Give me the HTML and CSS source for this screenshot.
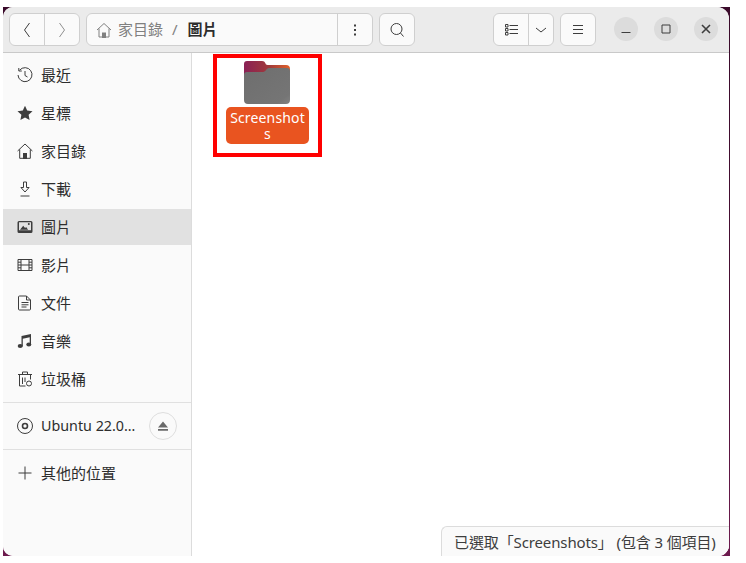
FILE: index.html
```html
<!DOCTYPE html>
<html lang="zh-Hant">
<head>
<meta charset="utf-8">
<title>圖片</title>
<link rel="stylesheet" href="styles.css">
</head>
<body>
<div class="desktop">
  <div class="window">
    <header class="toolbar">
      <div class="group nav">
        <button class="btn seg"><svg width="16" height="16" viewBox="0 0 16 16"><path class="ln" d="M10.500 1 5.500 8l5 7"/></svg></button>
        <button class="btn seg dim"><svg width="16" height="16" viewBox="0 0 16 16"><path class="ln" d="M5.500 1l5 7-5 7"/></svg></button>
      </div>
      <div class="group path">
        <div class="crumbs">
          <svg class="home-ic" width="16" height="16" viewBox="0 0 16 16"><path class="ln" d="M1 8 8 1.500 15 8M3 6.500V15h3.500M13 6.500V15H9.500"/><path class="solid" d="M6 10.500h4V16H6z"/></svg>
          <span class="crumb">家目錄</span>
          <span class="slash">/</span>
          <span class="crumb cur">圖片</span>
        </div>
        <button class="btn dots"><svg width="16" height="16" viewBox="0 0 16 16"><rect x="7" y="2.500" width="2" height="2"/><rect x="7" y="7" width="2" height="2"/><rect x="7" y="11.500" width="2" height="2"/></svg></button>
      </div>
      <button class="btn solo search"><svg width="16" height="16" viewBox="0 0 16 16"><circle class="ln" cx="7.500" cy="7" r="5.500"/><path class="ln" d="m11.500 11 3 3.500"/></svg></button>
      <div class="group view">
        <button class="btn viewlist"><svg width="13" height="12" viewBox="0 0 13 12"><path class="ln" d="M4.500 1.500H13M4.500 5.500H13M4.500 9.500H13"/><path class="ln" d="M.500.500h2.500v2.500H.500zM.500 4.500h2.500v2.500H.500zM.500 8.500h2.500v2.500H.500z"/></svg></button>
        <button class="btn viewmore"><svg width="12" height="12" viewBox="0 0 12 12"><path class="ln" d="M1 4l5 4 5-4"/></svg></button>
      </div>
      <button class="btn solo menu"><svg width="16" height="16" viewBox="0 0 16 16"><path class="ln" d="M3 3.500h10M3 7.500h10M3 11.500h10"/></svg></button>
      <div class="winctl">
        <button class="circle"><svg width="12" height="12" viewBox="0 0 12 12"><path class="ln" d="M1.500 9.500h9"/></svg></button>
        <button class="circle"><svg width="12" height="12" viewBox="0 0 12 12"><path class="ln" d="M2 2h8v8H2z"/></svg></button>
        <button class="circle"><svg width="12" height="12" viewBox="0 0 12 12"><path class="ln thick" d="M2 2l8 8M10 2 2 10"/></svg></button>
      </div>
    </header>
    <div class="body">
      <nav class="sidebar">
        <ul class="places">
          <li class="row"><svg class="ic" viewBox="0 0 16 16"><path class="ln" d="M2.600 3.200A7 7 0 1 1 1 8M1.800 1v3h3M8 4v4.500l2.500 1.500"/></svg><span>最近</span></li>
          <li class="row"><svg class="ic" viewBox="0 0 16 16"><path d="m8 .8 2.200 4.800 5.300.6-3.900 3.600 1 5.200L8 12.400l-4.600 2.600 1-5.200L.5 6.200l5.300-.6z"/></svg><span>星標</span></li>
          <li class="row"><svg class="ic" viewBox="0 0 16 16"><path class="ln" d="M.6 8 8 1l7.400 7M2.700 6.500v8.800h3.600"/><path class="ln" d="M13.300 6.500v8.800H9.700"/><path d="M6 10h4v6H6z"/></svg><span>家目錄</span></li>
          <li class="row"><svg class="ic" viewBox="0 0 16 16"><path class="ln" d="M6.500 1h3v5.500h2.600L8 11 3.900 6.500h2.600zM3.500 15h9"/></svg><span>下載</span></li>
          <li class="row on"><svg class="ic" viewBox="0 0 16 16"><path d="M2 2h12a1.500 1.500 0 0 1 1.500 1.500v9A1.500 1.500 0 0 1 14 14H2a1.500 1.500 0 0 1-1.500-1.500v-9A1.500 1.500 0 0 1 2 2zm0 1.200v8h12v-8z" fill-rule="evenodd"/><path d="m3 10.800 3.200-4 1.900 2.200 1-1 2 2.800z"/><circle cx="11.800" cy="5" r="1"/></svg><span>圖片</span></li>
          <li class="row"><svg class="ic" viewBox="0 0 16 16"><path class="ln" d="M1 2.500h14v11H1zM4 2.500v11M12 2.500v11M4 8h8M1 5.200h3M1 8h3M1 10.800h3M12 5.200h3M12 8h3M12 10.800h3"/></svg><span>影片</span></li>
          <li class="row"><svg class="ic" viewBox="0 0 16 16"><path class="ln" d="M2.500 1h7l4 4v9a1 1 0 0 1-1 1h-10a1 1 0 0 1-1-1V2a1 1 0 0 1 1-1zM9.500 1v4h4M4.500 7.500h7M4.500 9.800h7M4.500 12h5"/></svg><span>文件</span></li>
          <li class="row"><svg class="ic" viewBox="0 0 16 16"><path d="M4.500 3 14 1v10.500h-1.300V4.300L5.800 5.700v7.800H4.500z"/><ellipse cx="3.200" cy="13" rx="2.500" ry="2"/><ellipse cx="11.800" cy="11.500" rx="2.500" ry="2"/></svg><span>音樂</span></li>
          <li class="row"><svg class="ic" viewBox="0 0 16 16"><path class="ln" d="M1 3.500h14M5.500 3.500V1h5v2.500M2.500 3.500V15h6M13.500 3.500v5M5.500 6.500V13M8 6.500V11"/><circle class="ln" cx="12" cy="12.500" r="2.500"/></svg><span>垃圾桶</span></li>
        </ul>
        <div class="sep"></div>
        <div class="row device">
          <svg class="ic" viewBox="0 0 16 16"><circle class="ln" cx="8" cy="8" r="7.500"/><circle class="ln thick" cx="8" cy="8" r="2.500"/></svg>
          <span class="devname">Ubuntu 22.0…</span>
          <button class="eject"><svg width="12" height="12" viewBox="0 0 12 12"><path d="M6 1.500 11 7.500H1zM1 9h10v1.700H1z"/></svg></button>
        </div>
        <div class="sep"></div>
        <div class="row other"><svg class="ic" viewBox="0 0 16 16"><path class="ln" d="M8 1.500v13M1.500 8h13"/></svg><span>其他的位置</span></div>
      </nav>
      <main class="files">
        <div class="item">
          <svg class="folder" width="46" height="44" viewBox="0 0 46 44">
            <defs>
              <linearGradient id="back" x1="0" y1="0" x2="1" y2="0"><stop offset="0" stop-color="#8a2055"/><stop offset="0.55" stop-color="#a03a3a"/><stop offset="1" stop-color="#e0612a"/></linearGradient>
              <linearGradient id="front" x1="0" y1="0" x2="1" y2="1"><stop offset="0" stop-color="#6e6e6e"/><stop offset="0.85" stop-color="#757575"/><stop offset="1" stop-color="#828282"/></linearGradient>
            </defs>
            <path fill="url(#back)" d="M3 0h15c2 0 3 1 4 3.500C23 4 24 4 25 4h17a4 4 0 0 1 4 4v8H0V3a3 3 0 0 1 3-3z"/>
            <path fill="url(#front)" d="M3 11h15c2 0 3-.5 4-2 1-1.500 2-2 4-2h17a3 3 0 0 1 3 3v29a4 4 0 0 1-4 4H4a4 4 0 0 1-4-4V14a3 3 0 0 1 3-3z"/>
          </svg>
          <div class="label">Screenshots</div>
        </div>
        <div class="mark"></div>
        <div class="status">已選取「Screenshots」 (包含 3 個項目)</div>
      </main>
    </div>
  </div>
</div>
</body>
</html>
```
FILE: styles.css
```css
* { box-sizing: border-box; }
html, body { margin: 0; padding: 0; background: #fff; }
body { width: 746px; height: 563px; overflow: hidden; font-family: "Noto Sans", "Noto Sans CJK TC", sans-serif; color: #2d2d2d; }
.desktop {
  width: 727px; height: 549px; margin: 7px 0 0 3px; padding-right: 1px;
  background: linear-gradient(#3a0a2a, #4a0f34 60%, #6d1a4e);
}
.window {
  width: 726px; height: 549px; display: flex; flex-direction: column; overflow: hidden;
  background: #fafafa; border-radius: 10px 12px 11px 10px;
}
.toolbar {
  flex: none; height: 46px; padding: 6px 0 0 6px; display: flex; align-items: flex-start;
  background: #ebebeb; border-bottom: 1px solid #c9c9c9;
}
button { font: inherit; color: inherit; padding: 0; margin: 0; border: 0; background: none; display: flex; align-items: center; justify-content: center; }
svg { fill: #3d3d3d; display: block; }
.ln { fill: none; stroke: #3d3d3d; stroke-width: 1; }
.thick { stroke-width: 1.600; }
.group { display: flex; height: 33px; background: #fafafa; border: 1px solid #cfcfcf; border-radius: 6px; }
.btn.solo { width: 36px; height: 33px; background: #fafafa; border: 1px solid #cfcfcf; border-radius: 6px; }
.nav { width: 71px; }
.seg { flex: 1; }
.seg + .seg { border-left: 1px solid #cfcfcf; }
.dim svg .ln { stroke: #8f8f8f; }
.path { width: 287px; margin-left: 6px; justify-content: space-between; }
.crumbs { display: flex; align-items: center; padding-left: 9px; font-size: 15px; color: #808080; }
.home-ic { margin-right: 6px; }
.home-ic .ln { stroke: #808080; }
.home-ic .solid { fill: #808080; }
.slash { margin: 0 10px 0 9px; }
.cur { color: #2d2d2d; font-weight: 700; }
.crumb, .slash { padding-bottom: 2px; }
.dots { width: 35px; border-left: 1px solid #cfcfcf; }
.search { margin-left: 6px; }
.view { width: 61px; margin-left: 78px; }
.viewlist { width: 35px; border-right: 1px solid #cfcfcf; }
.viewmore { flex: 1; }
.menu { margin-left: 6px; }
.winctl { display: flex; gap: 16px; margin: 4px 0 0 18px; }
.circle { width: 24px; height: 24px; border-radius: 50%; background: #dcdcdc; }
.body { flex: 1; display: flex; min-height: 0; }
.sidebar { flex: none; width: 189px; background: #fafafa; border-right: 1px solid #dcdcdc; font-size: 15px; padding-top: 4px; }
.places { list-style: none; margin: 0; padding: 0; display: flex; flex-direction: column; gap: 2px; }
.row { height: 36px; display: flex; align-items: center; padding-left: 14px; gap: 8px; }
.row span { padding-bottom: 2px; }
.row.on { background: #e1e1e1; }
.ic { width: 16px; height: 16px; flex: none; }
.sep { height: 1px; background: #e0e0e0; }
.places + .sep { margin-top: 5px; }
.device { height: 46px; }
.devname { flex: 1; white-space: nowrap; font-size: 14.300px; }
.eject { width: 28px; height: 28px; margin-right: 14px; border-radius: 50%; border: 1px solid #dedede; }
.eject svg { fill: #6a6a6a; }
.other { height: 46px; }
.files { flex: 1; position: relative; background: #fff; padding: 8px 0 0 34px; }
.item { width: 83px; display: flex; flex-direction: column; align-items: flex-start; }
.folder { margin-left: 18px; }
.label { width: 83px; height: 37px; margin-top: 2px; padding: 3px 3px 0; background: #e95420; color: #fff; border-radius: 5px; text-align: center; font-size: 14px; line-height: 16px; word-break: break-all; letter-spacing: .15px; }
.mark { position: absolute; left: 21px; top: 1px; width: 109px; height: 103px; border: 4px solid #f00; }
.status { position: absolute; right: 0; bottom: 0; height: 30px; width: 288px; padding: 4px 0 0 12px; background: #fafafa; border: 1px solid #dcdcdc; border-width: 1px 0 0 1px; border-radius: 6px 0 0 0; font-size: 15px; letter-spacing: -.12px; color: #3d3d3d; white-space: nowrap; }
```
